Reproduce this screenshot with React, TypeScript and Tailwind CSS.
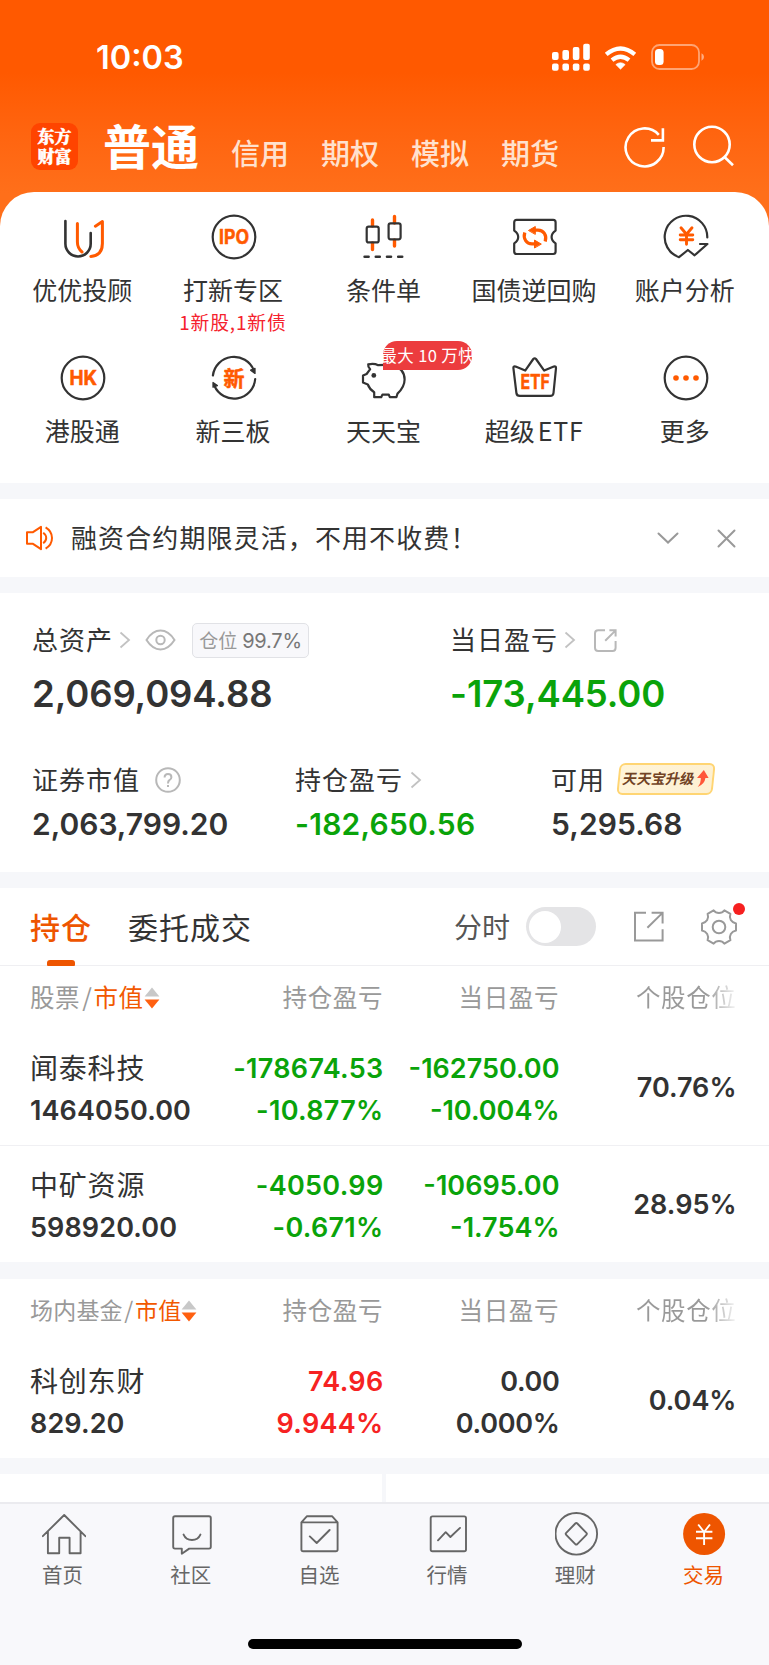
import type { ReactNode } from 'react';

const DARK = '#333333';
const ORANGE = '#ff5a00';

function Icon({ children }: { children: ReactNode }) {
  return (
    <svg
      className="ml-[2px] block h-11 w-11 shrink-0 overflow-visible"
      viewBox="0 0 44 44"
      fill="none"
      stroke={DARK}
      strokeWidth="2.2"
      strokeLinecap="round"
      strokeLinejoin="round"
    >
      {children}
    </svg>
  );
}

function IconText({ x, y, size, len, children }: { x: number; y: number; size: number; len: number; children: string }) {
  return (
    <text
      x={x}
      y={y}
      fontSize={size}
      textLength={len}
      lengthAdjust="spacingAndGlyphs"
      className="font-['Inter','Noto_Sans_CJK_SC',sans-serif] font-bold"
      fill={ORANGE}
      stroke={ORANGE}
      strokeWidth="0.5"
    >
      {children}
    </text>
  );
}

const UuIcon = () => (
  <Icon>
    <path d="M4.4 6V28.8a12.6 12.6 0 0 0 25.3 0V18" strokeWidth="2.6" />
    <path d="M16.4 8.5V27q0 6 4.6 10M34.4 11.2 41.4 6.6V28.5q0 12-11.6 12.9" stroke={ORANGE} strokeWidth="3" />
  </Icon>
);
const IpoIcon = () => (
  <Icon>
    <circle cx="22" cy="22" r="21.3" />
    <IconText x={7} y={29.2} size={19.5} len={30}>IPO</IconText>
  </Icon>
);
const CandleIcon = () => (
  <Icon>
    <path d="M10.5 5V11M10.5 28V34.5M32.5 1.5V8M32.5 25V31" stroke={ORANGE} strokeWidth="3.4" />
    <rect x="4.7" y="11.6" width="12" height="15.8" rx="2" />
    <rect x="26.6" y="8.3" width="12" height="16" rx="2" />
    <path d="M2.6 41.7h4M13.8 41.7h4M25 41.7h4M36.2 41.7h4" strokeWidth="2.6" />
  </Icon>
);
const BondIcon = () => (
  <Icon>
    <path d="M3.6 4.9H40.2Q42.6 4.9 42.6 7.4V15.6Q38.6 18.2 38.6 22T42.6 28.4V36.6Q42.6 39 40.2 39H3.6Q1.2 39 1.2 36.6V28.4Q5.2 25.8 5.2 22T1.2 15.6V7.4Q1.2 4.9 3.6 4.9Z" />
    <path d="M11.8 17.6C9.8 24 13.6 28.9 19 28.9H22M32.2 26.4C34.2 20 30.4 15.2 25 15.2H22" stroke={ORANGE} strokeWidth="3.2" strokeLinecap="butt" />
    <path d="M15.8 15.3 22.3 11.5V19ZM28 28.9 21.5 25.1V32.6Z" fill={ORANGE} stroke={ORANGE} strokeWidth="1" />
  </Icon>
);
const AccountIcon = () => (
  <Icon>
    <path d="M43.3 22.5A21.3 21.3 0 1 0 15 42.2L23.9 35 30.6 40.3 43.4 29H36" />
    <path d="M17 12.8 22.5 19.2 28 12.8M22.5 19V29.2M16.2 20H28.8M16.2 24.7H28.8" stroke={ORANGE} strokeWidth="2.9" />
  </Icon>
);
const HkIcon = () => (
  <Icon>
    <circle cx="22" cy="22" r="21.3" />
    <IconText x={8.6} y={29.2} size={19.5} len={27.5}>HK</IconText>
  </Icon>
);
const NewBoardIcon = () => (
  <Icon>
    <path d="M.9 19.5A21.3 21.3 0 0 1 41.8 14.2M43.2 23A21.3 21.3 0 0 1 2.4 29.8" />
    <path d="M38.6 14.2 43 12.4V17.4ZM1 26.5V31.2L5.4 29.6Z" fill={DARK} strokeWidth="1.3" />
    <IconText x={11.6} y={29.8} size={21} len={21}>新</IconText>
  </Icon>
);
const PigIcon = () => (
  <Icon>
    <path d="M6.2 8.4Q12 7 16.2 9.2L30 8.6Q42.6 12.5 42.6 23.5 42.6 31 35.5 37.6L34.4 41.2H27.8L26.8 38.6H20.4L19.2 41.2H12.2V36.2Q7.6 33.4 5.8 28.5L1 26.6V19.6L4.6 18 8.2 13.2Q5.8 11 6.2 8.4Z" />
    <circle cx="11.8" cy="19.4" r="2.4" fill={DARK} stroke="none" />
  </Icon>
);
const EtfIcon = () => (
  <Icon>
    <path d="M.4 12.2Q.1 9.8 2.6 10.6L12.2 14.6 20.3 3Q21.7 1.6 23 3L31.2 14.6 40.8 10.6Q43.3 9.8 43 12.2L40.5 37Q40.2 39.9 37.2 39.9H6.8Q3.8 39.9 3.4 37Z" />
    <IconText x={7.4} y={33} size={19.5} len={29.5}>ETF</IconText>
  </Icon>
);
const MoreIcon = () => (
  <Icon>
    <circle cx="22" cy="22" r="21.3" />
    <g fill={ORANGE} stroke="none">
      <circle cx="12" cy="22" r="2.8" />
      <circle cx="22" cy="22" r="2.8" />
      <circle cx="32" cy="22" r="2.8" />
    </g>
  </Icon>
);

type Shortcut = { label: ReactNode; icon: ReactNode; note?: string; badge?: string };
const shortcuts: Shortcut[] = [
  { label: '优优投顾', icon: <UuIcon /> },
  { label: '打新专区', icon: <IpoIcon />, note: '1新股,1新债' },
  { label: '条件单', icon: <CandleIcon /> },
  { label: '国债逆回购', icon: <BondIcon /> },
  { label: '账户分析', icon: <AccountIcon /> },
  { label: '港股通', icon: <HkIcon /> },
  { label: '新三板', icon: <NewBoardIcon /> },
  { label: '天天宝', icon: <PigIcon />, badge: '最大 10 万快' },
  { label: <>超级<span className="ml-[3px] tracking-[0.8px]">ETF</span></>, icon: <EtfIcon /> },
  { label: '更多', icon: <MoreIcon /> },
];

function StatusBar() {
  return (
    <div className="flex h-[114px] items-center justify-between pr-[64px] pl-[96px] text-white">
      <span className="pt-[2px] font-['Inter',sans-serif] text-[32.5px] leading-none font-semibold">10:03</span>
      <div className="flex items-center">
        <svg className="h-[28px] w-[38px]" viewBox="0 0 38 28" fill="#fff">
          <rect x="0" y="9" width="6.6" height="8" rx="2" />
          <rect x="10.4" y="7" width="6.6" height="10" rx="2" />
          <rect x="20.8" y="4" width="6.6" height="13" rx="2" />
          <rect x="31.2" y="0.8" width="6.6" height="16.2" rx="2" />
          <rect x="0" y="20.5" width="6.6" height="7.2" rx="2" />
          <rect x="10.4" y="20.5" width="6.6" height="7.2" rx="2" />
          <rect x="20.8" y="20.5" width="6.6" height="7.2" rx="2" />
          <rect x="31.2" y="20.5" width="6.6" height="7.2" rx="2" />
        </svg>
        <svg className="ml-[14px] h-[25px] w-[33px]" viewBox="0 0 33 25" fill="#fff">
          <path d="M16.5 24.2 11.8 19.6Q16.5 15.8 21.2 19.6Z" stroke="#fff" strokeWidth=".6" />
          <path d="M2.2 9.4Q16.5-2.6 30.8 9.4M8 15.2Q16.5 8.2 25 15.2" fill="none" stroke="#fff" strokeWidth="4.3" />
        </svg>
        <svg className="ml-[14px] h-[26px] w-[54px]" viewBox="0 0 54 26" fill="none">
          <rect x="1" y="1" width="47" height="24" rx="7.5" stroke="#fff" strokeOpacity=".45" strokeWidth="1.8" />
          <path d="M50.5 9.3Q53 10.5 53 13T50.5 16.7Z" fill="#fff" fillOpacity=".5" />
          <rect x="4" y="5" width="8.6" height="16" rx="3.5" fill="#fff" />
        </svg>
      </div>
    </div>
  );
}

function Header() {
  return (
    <div className="flex h-[78px] items-start pl-[31px] text-white">
      <div className="mt-[9px] flex h-[47px] w-[47px] shrink-0 justify-center rounded-[9px] bg-[#ff4400] pt-[3px] text-center font-['Noto_Serif_CJK_SC','Noto_Sans_CJK_SC',sans-serif] text-[17px] leading-[19.5px] font-black [-webkit-text-stroke:0.5px_white]">
        <span>
          东方
          <br />
          财富
        </span>
      </div>
      <div className="ml-[25px] w-[100px] text-[48px] leading-[60px] font-bold whitespace-nowrap">普通</div>
      <div className="mt-[13px] ml-[28px] flex gap-[32px] text-[29px] leading-[50px] font-medium whitespace-nowrap text-[#ffe1ce]">
        <span>信用</span>
        <span>期权</span>
        <span>模拟</span>
        <span>期货</span>
      </div>
      <svg className="mt-[11px] ml-[64px] h-[44px] w-[44px]" viewBox="0 0 44 44" fill="none" stroke="#fff" strokeWidth="2.6">
        <path d="M40.6 22A19 19 0 1 1 35.8 9.8M39.9 3.2V15.4H28" />
      </svg>
      <svg className="mt-[9px] ml-[25px] h-[44px] w-[44px]" viewBox="0 0 44 44" fill="none" stroke="#fff" strokeWidth="2.6">
        <circle cx="20" cy="21.5" r="17.7" />
        <path d="M32.5 34 41 42.2" />
      </svg>
    </div>
  );
}

function Shortcuts() {
  return (
    <div className="grid h-[291px] grid-cols-5 content-start rounded-t-[34px] bg-white pt-[23px] pr-[9px] pl-[7px]">
      {shortcuts.map((s, i) => (
        <div key={i} className="relative flex h-[141px] flex-col items-center whitespace-nowrap">
          {s.icon}
          {s.badge && (
            <div className="absolute top-[-15px] left-[75px] flex h-[29px] w-[89px] items-center justify-center overflow-hidden rounded-[14px] rounded-bl-none bg-[#ec3c3e] text-[16.5px] leading-none tracking-[0.4px] text-white">
              <span className="-mt-[1px]">{s.badge}</span>
            </div>
          )}
          <div className="mt-[15px] text-[25px] leading-[30px] text-[#333]">{s.label}</div>
          {s.note && <div className="mt-[6px] text-[18.8px] leading-[24px] tracking-[0.9px] text-[#f5222d]">{s.note}</div>}
        </div>
      ))}
    </div>
  );
}

function Gap() {
  return <div className="h-4 bg-[#f6f7fa]" />;
}

function Notice() {
  return (
    <div className="flex h-[78px] items-center bg-white pl-[25px]">
      <svg className="h-[26px] w-[29px]" viewBox="0 0 29 26" fill="none" stroke={ORANGE} strokeWidth="2" strokeLinejoin="round">
        <path d="M2 7.2H8L16 1.8V24.2L8 18.8H2Z" />
        <path d="M18.2 7.8Q21.2 10 21.2 13T18.2 18.2M20.6 2.4Q27 6.2 27 13T20.6 23.6" />
      </svg>
      <div className="-mt-[2px] ml-[17px] w-[586px] text-[26px] leading-[32px] tracking-[1.1px] text-[#333]">融资合约期限灵活，不用不收费！</div>
      <svg className="h-[12px] w-[22px]" viewBox="0 0 22 12" fill="none" stroke="#999" strokeWidth="2" strokeLinecap="round">
        <path d="M1.5 1.5 11 10.5 20.5 1.5" />
      </svg>
      <svg className="ml-[38px] h-[19px] w-[19px]" viewBox="0 0 19 19" fill="none" stroke="#999" strokeWidth="2" strokeLinecap="round">
        <path d="M1.5 1.5 17.5 17.5M17.5 1.5 1.5 17.5" />
      </svg>
    </div>
  );
}

function Chevron() {
  return (
    <svg className="h-[18px] w-[12px] shrink-0" viewBox="0 0 12 18" fill="none" stroke="#c2c2c2" strokeWidth="1.8">
      <path d="M1.5 1.5 10 9 1.5 16.5" />
    </svg>
  );
}

function Label({ children }: { children: string }) {
  return <span className="-mt-[2px] text-[26px] leading-[32px] tracking-[1px] text-[#333]">{children}</span>;
}

function Assets() {
  return (
    <div className="flex h-[279px] flex-col bg-white pt-[29px] pl-[32px] whitespace-nowrap">
      <div className="flex h-[112px]">
        <div className="w-[419px]">
          <div className="flex h-9 items-center">
            <Label>总资产</Label>
            <div className="ml-[6px]"><Chevron /></div>
            <svg className="ml-[14px] h-[22px] w-[31px]" viewBox="0 0 31 22" fill="none" stroke="#b8b8b8" strokeWidth="2">
              <path d="M1.5 11Q7.5 1.6 15.5 1.6T29.5 11Q23.5 20.4 15.5 20.4T1.5 11Z" />
              <circle cx="15.5" cy="11" r="4.2" />
            </svg>
            <div className="ml-[16px] flex h-[35px] w-[117px] items-center justify-center rounded-[5px] border border-[#e1e2e6] bg-[#f8f8fb] text-[19px] leading-none text-[#999]">
              <span className="-mt-[2px]">仓位</span>
              <span className="ml-[5px] pt-[2px] font-['Inter',sans-serif] text-[20px] tracking-[-0.2px] text-[#777]">99.7%</span>
            </div>
          </div>
          <div className="mt-[14px] font-['Inter',sans-serif] text-[36.5px] leading-[44px] font-semibold tracking-[-0.1px] text-[#333]">2,069,094.88</div>
        </div>
        <div>
          <div className="-ml-px flex h-9 items-center">
            <Label>当日盈亏</Label>
            <div className="ml-[6px]"><Chevron /></div>
            <svg className="ml-[17px] h-[25px] w-[25px]" viewBox="0 0 25 25" fill="none" stroke="#b8b8b8" strokeWidth="2">
              <path d="M12 2.2H5.2Q2 2.2 2 5.4V19.8Q2 23 5.2 23H19.6Q22.6 23 22.6 19.8V13M12.2 12.8 22.4 2.6M16.4 2.2H22.6V8.6" />
            </svg>
          </div>
          <div className="-ml-px mt-[14px] font-['Inter',sans-serif] text-[36.5px] leading-[44px] font-semibold tracking-[-0.1px] text-[#0aa30a]">-173,445.00</div>
        </div>
      </div>
      <div className="mt-[28px] flex">
        <div className="w-[263px]">
          <div className="flex h-9 items-center">
            <Label>证券市值</Label>
            <svg className="ml-[15px] h-[26px] w-[26px]" viewBox="0 0 26 26" fill="none" stroke="#b8b8b8" strokeWidth="2">
              <circle cx="13" cy="13" r="11.8" />
              <path d="M9.6 10.6Q9.6 7 13 7T16.4 10.2Q16.4 12 14.4 13.2 13 14.1 13 16.4M13 18V20" />
            </svg>
          </div>
          <div className="mt-[8px] font-['Inter',sans-serif] text-[30px] leading-[36px] font-semibold text-[#333]">2,063,799.20</div>
        </div>
        <div className="w-[256px]">
          <div className="flex h-9 items-center">
            <Label>持仓盈亏</Label>
            <div className="ml-[7px]"><Chevron /></div>
          </div>
          <div className="mt-[8px] font-['Inter',sans-serif] text-[30px] leading-[36px] font-semibold tracking-[0.25px] text-[#0aa30a]">-182,650.56</div>
        </div>
        <div>
          <div className="flex h-9 items-center">
            <Label>可用</Label>
            <div className="-mt-[3px] ml-[13px] flex h-[32px] w-[96px] -skew-x-6 items-center justify-center rounded-[6px] border-2 border-[#ffd573] bg-linear-to-r from-[#fff4d8] to-[#fdf0d2] text-[#714325]">
              <span className="-mt-[1px] -skew-x-6 text-[14.3px] leading-none font-bold">天天宝升级</span>
              <svg className="-mt-[2px] ml-[2px] h-[17px] w-[13px]" viewBox="0 0 12 17" fill="#ff5638">
                <path d="M6.4 0 12 8H8.8Q8.8 14 2 17 5 13 4.2 8H.4Z" />
              </svg>
            </div>
          </div>
          <div className="mt-[8px] font-['Inter',sans-serif] text-[30px] leading-[36px] font-semibold tracking-[0.1px] text-[#333]">5,295.68</div>
        </div>
      </div>
    </div>
  );
}

function Tabs() {
  return (
    <div className="flex h-[78px] items-center border-b border-[#efeff2] bg-white pl-[30px] whitespace-nowrap">
      <div className="relative flex h-full w-[61px] items-center text-[30px] font-medium tracking-[1px] text-[#ee5500]">
        <span className="-mt-[1px]">持仓</span>
        <div className="absolute bottom-[-1px] left-[17px] h-[6px] w-[28px] rounded-t-[3px] rounded-b-[1px] bg-[#ee5500]" />
      </div>
      <div className="-mt-[1px] ml-[37px] w-[326px] text-[30px] tracking-[1px] text-[#333]">委托成交</div>
      <div className="-mt-[1px] text-[28px] text-[#555]">分时</div>
      <div className="ml-[16px] flex h-[39px] w-[70px] items-center rounded-full bg-[#e4e4e6] pl-[3px]">
        <div className="h-8 w-8 rounded-full bg-white" />
      </div>
      <svg className="ml-[37px] h-[31px] w-[31px]" viewBox="0 0 31 31" fill="none" stroke="#999" strokeWidth="2">
        <path d="M13 1.8H2V29.4H29.6V18.2M14.4 16.8 29 2.4M18.6 1.8H29.6V12.6" />
      </svg>
      <div className="relative ml-[37px]">
        <svg className="h-[36px] w-[36px]" viewBox="0 0 36 36" fill="none" stroke="#999" strokeWidth="2" strokeLinejoin="round">
          <path d="M12.6 1.4Q14.6 4 18 4T23.4 1.4L29.4 4.8Q28.2 8.4 29.8 11T35 14.4V21.6Q31.4 22.4 29.8 25T29.4 31.2L23.4 34.6Q21.4 32 18 32T12.6 34.6L6.6 31.2Q7.8 27.6 6.2 25T1 21.6V14.4Q4.6 13.6 6.2 11T6.6 4.8Z" />
          <circle cx="18" cy="18" r="6.3" />
        </svg>
        <div className="absolute top-[-6px] left-[32px] h-[12px] w-[12px] rounded-full bg-[#f62020]" />
      </div>
    </div>
  );
}

function TableHead({ children }: { children: ReactNode }) {
  return (
    <div className="flex h-[63px] items-center bg-white pl-[30px] text-[24.5px] tracking-[0.6px] whitespace-nowrap text-[#999]">
      <div className="flex w-[199px] items-center">
        {children}
        <svg className="h-[22px] w-[16px]" viewBox="0 0 16 22">
          <path d="M8 .4 15.4 9.4H.6Z" fill="#c8c8c8" />
          <path d="M.6 12.4H15.4L8 21.4Z" fill="#ff6010" />
        </svg>
      </div>
      <div className="-mt-[1px] w-[154px] text-right">持仓盈亏</div>
      <div className="-mt-[1px] w-[176px] text-right">当日盈亏</div>
      <div className="-mt-[1px] ml-[77px] bg-linear-to-r from-[#999] from-70% to-[#f4f4f4] bg-clip-text text-transparent">个股仓位</div>
    </div>
  );
}

type Holding = { name: string; value: string; pl: [string, string]; day: [string, string]; weight: string; plTone: string; dayTone: string };

function Row({ h }: { h: Holding }) {
  return (
    <div className="flex h-[116px] items-center bg-white pl-[30px] font-['Inter',sans-serif] text-[27px] leading-[42px] font-semibold whitespace-nowrap text-[#333]">
      <div className="w-[178px] pt-[5px]">
        <div className="-mt-[2px] pb-[2px] font-['Noto_Sans_CJK_SC',sans-serif] text-[28px] font-normal tracking-[0.8px]">{h.name}</div>
        <div className="tracking-[0.1px]">{h.value}</div>
      </div>
      <div className={`w-[175.5px] pt-[5px] text-right tracking-[0.3px] ${h.plTone}`}>
        <div>{h.pl[0]}</div>
        <div>{h.pl[1]}</div>
      </div>
      <div className={`w-[176px] pt-[5px] text-right ${h.dayTone}`}>
        <div>{h.day[0]}</div>
        <div>{h.day[1]}</div>
      </div>
      <div className="w-[177px] pt-[2px] text-right">{h.weight}</div>
    </div>
  );
}

const GREEN = 'text-[#0aa30a]';
const RED = 'text-[#f62222]';
const stocks: Holding[] = [
  { name: '闻泰科技', value: '1464050.00', pl: ['-178674.53', '-10.877%'], day: ['-162750.00', '-10.004%'], weight: '70.76%', plTone: GREEN, dayTone: GREEN },
  { name: '中矿资源', value: '598920.00', pl: ['-4050.99', '-0.671%'], day: ['-10695.00', '-1.754%'], weight: '28.95%', plTone: GREEN, dayTone: GREEN },
];
const fund: Holding = { name: '科创东财', value: '829.20', pl: ['74.96', '9.944%'], day: ['0.00', '0.000%'], weight: '0.04%', plTone: RED, dayTone: 'tracking-[-0.3px]' };

const navItems: { label: string; active?: boolean; icon: ReactNode }[] = [
  { label: '首页', icon: <path d="M.8 24.2 22.2 3 43.4 24.2M5.9 19.5V41.2H17.2V25.8H27.6V41.2H38.6V19.5" /> },
  { label: '社区', icon: <path d="M5 4.2H39Q40.8 4.2 40.8 6V34.8Q40.8 36.6 39 36.6H19.2L11.8 41.8V36.6H5Q3.2 36.6 3.2 34.8V6Q3.2 4.2 5 4.2ZM13.6 22.6Q16 28 22 28T30.4 22.6" /> },
  { label: '自选', icon: <path d="M3.4 10.4 9 4.2H34L39.6 10.4V37.4Q39.6 39.2 37.8 39.2H5.2Q3.4 39.2 3.4 37.4V10.4H39.6M11.8 24.4 18.7 31 31.6 18" /> },
  { label: '行情', icon: <path d="M5.5 4.4H37.2Q39 4.4 39 6.2V37.4Q39 39.2 37.2 39.2H5.5Q3.7 39.2 3.7 37.4V6.2Q3.7 4.4 5.5 4.4ZM11 28.3 18.7 20.2 23.4 25 33 15.9" /> },
  {
    label: '理财',
    icon: (
      <>
        <circle cx="21.3" cy="21.8" r="20.8" />
        <path d="M20.3 11.5Q21.3 10.5 22.3 11.5L31.4 20.8Q32.4 21.8 31.4 22.8L22.3 32.1Q21.3 33.1 20.3 32.1L11.2 22.8Q10.2 21.8 11.2 20.8Z" />
      </>
    ),
  },
  {
    label: '交易',
    active: true,
    icon: (
      <>
        <circle cx="21.1" cy="22" r="21" fill="#ee5500" stroke="none" />
        <path d="M15.2 12.5 21.1 20 27 12.5M21.1 20V33M13 19.8H29.4M13 26.2H29.4" stroke="#fff" strokeLinecap="butt" />
      </>
    ),
  },
];

function NavBar() {
  return (
    <div className="flex h-[163px] flex-col items-center border-t-2 border-[#ebebef] bg-[#f8f8fb]">
      <div className="grid w-full grid-cols-6 pt-[8px]">
        {navItems.map((n) => (
          <div key={n.label} className={`flex flex-col items-center text-[20.5px] leading-[26px] ${n.active ? 'text-[#ee5500]' : 'text-[#666]'}`}>
            <svg className="block h-11 w-11" viewBox="0 0 44 44" fill="none" stroke="#666" strokeWidth="1.9" strokeLinecap="round" strokeLinejoin="round">
              {n.icon}
            </svg>
            <span className="mt-[5px] mr-[3px]">{n.label}</span>
          </div>
        ))}
      </div>
      <div className="mt-[52px] h-[10px] w-[274px] rounded-full bg-black" />
    </div>
  );
}

export default function App() {
  return (
    <div className="h-[1665px] w-[769px] overflow-hidden bg-white font-['Noto_Sans_CJK_SC',sans-serif]">
      <div className="bg-linear-to-b from-[#ff5900] from-15% to-[#ff6f1a] to-40%">
        <StatusBar />
        <Header />
        <Shortcuts />
      </div>
      <Gap />
      <Notice />
      <Gap />
      <Assets />
      <Gap />
      <Tabs />
      <TableHead>
        <span className="-mt-[1px]">股票<span className="mr-[1px] ml-[2px]">/</span><span className="text-[#f25800]">市值</span></span>
      </TableHead>
      <Row h={stocks[0]} />
      <div className="h-px bg-[#f0f0f3]" />
      <Row h={stocks[1]} />
      <div className="h-[17px] bg-[#f6f7fa]" />
      <TableHead>
        <span className="-mt-[2px] text-[23px] tracking-[0.2px]">场内基金<span className="mx-[1.5px]">/</span><span className="text-[#f25800]">市值</span></span>
      </TableHead>
      <Row h={fund} />
      <Gap />
      <div className="flex h-[28px] gap-[4px] bg-[#f6f7fa]">
        <div className="w-[382px] bg-white" />
        <div className="flex-1 bg-white" />
      </div>
      <NavBar />
    </div>
  );
}
